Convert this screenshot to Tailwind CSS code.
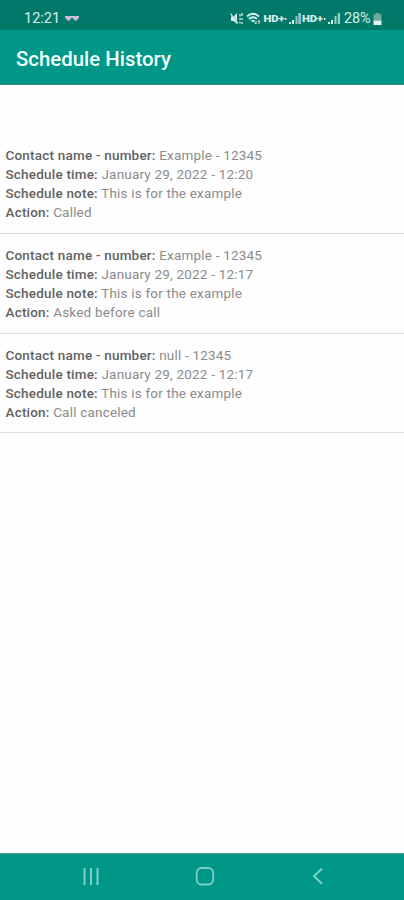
<!DOCTYPE html>
<html lang="en">
<head>
<meta charset="utf-8">
<title>Schedule History</title>
<script src="https://cdn.jsdelivr.net/npm/@tailwindcss/browser@4"></script>
</head>
<body class="bg-white font-['Roboto',sans-serif]">
<div class="flex h-[900px] w-[404px] flex-col overflow-hidden bg-[#fefefe]">
  <div class="flex h-[30px] shrink-0 items-center bg-[#00796b] pt-[8px] pl-6 text-[#d9f0ec]">
    <span class="w-[36px] text-[14.5px] leading-[22px] whitespace-nowrap">12:21</span>
    <svg class="ml-[5px]" width="14" height="8" viewBox="0 0 14 8" fill="#cbb9d6"><path d="M0 1h14v1.200l-2 3.300h-2.500L7.500 2.800h-1L4.800 5.500H2.300L0 2.200z"/></svg>
    <svg class="ml-[151px]" width="112" height="16" viewBox="0 0 112 16" fill="#d9f0ec" stroke="none">
      <path d="M1 5.500h2.500L7 2v11L3.500 10H1z"/>
      <path d="M1 2l7 11" stroke="#00796b" stroke-width="1"/>
      <path d="M0.500 2.500l7.500 10M10 3v2.500M12 2v3M10 7v2M12 7v2M10 10.500v2M12 11v2" stroke="#d9f0ec" stroke-width="1.200" fill="none"/>
      <path d="M17 5.500q6-5.500 12 0M19 8q4-3.600 8 0M21.500 10.300q1.500-1.300 3 0" stroke="#d9f0ec" stroke-width="1.900" fill="none"/>
      <path d="M26 10v3M24.500 11.500l1.500 1.500M29 13v-3.500M27.800 10.700l1.200-1.200 1.200 1.200" stroke="#d9f0ec" stroke-width="1" fill="none"/>
      <text x="33.500" y="10.700" font-size="8.500" font-weight="900" textLength="21" lengthAdjust="spacingAndGlyphs">HD+</text>
      <path d="M55 7h1.500v2H55zM59 11h2v2h-2zM62 9h2v4h-2z"/>
      <path d="M65.500 5h2v8h-2zM68.300 2h2.700v11h-2.700z" opacity=".65"/>
      <text x="72" y="10.700" font-size="8.500" font-weight="900" textLength="21" lengthAdjust="spacingAndGlyphs">HD+</text>
      <path d="M94 7h1.500v2H94zM98 11h2v2h-2zM101 9h2v4h-2z"/>
      <path d="M104.500 5h2v8h-2zM107.700 2h2.300v11h-2.300z" opacity=".7"/>
    </svg>
    <span class="ml-[2px] w-[28px] text-[14.5px] leading-[22px] tracking-[-0.1px] whitespace-nowrap">28%</span>
    <svg class="ml-px" width="9" height="14" viewBox="0 0 9 14"><path d="M2.500 1h4v1.500H8.500v6h-8v-6h2z" fill="#72aaa3"/><path d="M.5 8.500h8V13h-8z" fill="#e3f5f2"/></svg>
  </div>
  <header class="flex h-[55px] shrink-0 items-center border-b border-[#35877d] bg-[#009788] pt-[3px] pl-4">
    <h1 class="text-[20.4px] leading-6 font-medium whitespace-nowrap text-[#f1fffc]">Schedule History</h1>
  </header>
  <main class="flex-1 pt-[49px] text-[13.5px] leading-[19.1px] tracking-[0.2px] whitespace-nowrap text-[#8b8b8b]">
    <section class="h-[100px] border-b border-[#dedede] pt-[12px] pl-[5.5px]">
      <p><b class="font-medium text-[#626262]">Contact name - number:</b> Example - 12345</p>
      <p><b class="font-medium text-[#626262]">Schedule time:</b> January 29, 2022 - 12:20</p>
      <p><b class="font-medium text-[#626262]">Schedule note:</b> This is for the example</p>
      <p><b class="font-medium text-[#626262]">Action:</b> Called</p>
    </section>
    <section class="h-[100px] border-b border-[#dedede] pt-[12px] pl-[5.5px]">
      <p><b class="font-medium text-[#626262]">Contact name - number:</b> Example - 12345</p>
      <p><b class="font-medium text-[#626262]">Schedule time:</b> January 29, 2022 - 12:17</p>
      <p><b class="font-medium text-[#626262]">Schedule note:</b> This is for the example</p>
      <p><b class="font-medium text-[#626262]">Action:</b> Asked before call</p>
    </section>
    <section class="h-[99px] border-b border-[#dedede] pt-[11.5px] pl-[5.5px]">
      <p><b class="font-medium text-[#626262]">Contact name - number:</b> null - 12345</p>
      <p><b class="font-medium text-[#626262]">Schedule time:</b> January 29, 2022 - 12:17</p>
      <p><b class="font-medium text-[#626262]">Schedule note:</b> This is for the example</p>
      <p><b class="font-medium text-[#626262]">Action:</b> Call canceled</p>
    </section>
  </main>
  <nav class="flex h-[47px] shrink-0 items-center justify-between border-t border-[#4fa398] bg-[#009788] pr-[77px] pl-[82px]">
    <svg width="18" height="20" viewBox="0 0 18 20" fill="none" stroke="#80d0c7" stroke-width="2"><path d="M2.500 1v17M9 1v17M15.500 1v17"/></svg>
    <svg width="20" height="20" viewBox="0 0 20 20" fill="none" stroke="#80d0c7" stroke-width="1.800"><rect x="1.700" y="1" width="16.500" height="16.500" rx="5"/></svg>
    <svg width="18" height="20" viewBox="0 0 18 20" fill="none" stroke="#80d0c7" stroke-width="2"><path d="M13 1.500L5 9.200l8 7.500"/></svg>
  </nav>
</div>
</body>
</html>
